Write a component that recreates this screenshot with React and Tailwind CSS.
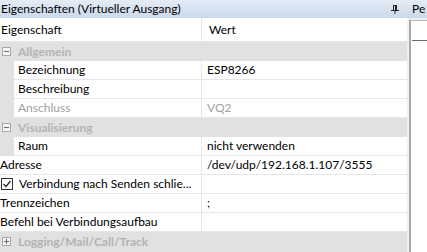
import React from 'react';

const font = { fontFamily: 'Lato, "Noto Sans", sans-serif' };

const Toggle = ({ open }) => (
  <svg width="9" height="9" viewBox="0 0 9 9" className="shrink-0">
    <rect x="0.5" y="0.5" width="8" height="8" fill="#f4f4f4" stroke="#a8a8a8" />
    <line x1="2" y1="4.5" x2="7" y2="4.5" stroke="#6a6a6a" />
    {!open && <line x1="4.5" y1="2" x2="4.5" y2="7" stroke="#6a6a6a" />}
  </svg>
);

const Pin = () => (
  <svg width="8" height="9" viewBox="0 0 8 9">
    <rect x="2" y="0" width="4" height="1" fill="#222" />
    <rect x="2" y="1" width="1" height="4" fill="#222" />
    <rect x="4" y="1" width="2" height="4" fill="#222" />
    <rect x="0" y="5" width="8" height="1" fill="#222" />
    <rect x="3.5" y="6" width="1" height="3" fill="#222" />
  </svg>
);

const Check = () => (
  <svg width="12" height="12" viewBox="0 0 12 12" className="shrink-0">
    <rect x="0.5" y="0.5" width="11" height="11" fill="#fff" stroke="#333" />
    <path d="M2.5 6 L5 8.5 L9.5 3" fill="none" stroke="#222" strokeWidth="1.2" />
  </svg>
);

const Group = ({ label, open = true }) => (
  <div className="flex h-[19px] items-center bg-[#e1e1e1] pl-[2px]">
    <Toggle open={open} />
    <span className="ml-[7px] font-bold text-[#b3b3b3]">{label}</span>
  </div>
);

const Row = ({ name, value, indent, muted, check }) => (
  <div className={`flex h-[19px] ${indent ? 'bg-[#e1e1e1] pl-[14px]' : 'bg-white'}`}>
    <div className="flex flex-1 bg-white border-b border-[#e6e6e6]">
      <div
        className={`flex items-center border-r border-[#e6e6e6] ${indent ? 'w-[188px] pl-[4px]' : 'w-[202px]'} ${
          muted ? 'text-[#a0a0a0]' : 'text-black'
        }`}
      >
        {check && (
          <span className="ml-[1px] mr-[6px] flex">
            <Check />
          </span>
        )}
        <span className="whitespace-nowrap">{name}</span>
      </div>
      <div className={`flex items-center pl-[5px] ${muted ? 'text-[#a0a0a0]' : 'text-black'}`}>{value}</div>
    </div>
  </div>
);

export default function App() {
  return (
    <div className="flex h-[252px] w-[427px] overflow-hidden bg-[#f0f0f0] text-[12px] leading-none" style={font}>
      {/* Property grid panel */}
      <div className="flex w-[409px] flex-col">
        <div className="flex h-[18px] items-center justify-between bg-gradient-to-b from-[#e4ecf6] to-[#cad9eb] pr-[10px]">
          <span className="pl-[1px] text-black">Eigenschaften (Virtueller Ausgang)</span>
          <Pin />
        </div>
        <div className="flex w-[407px] flex-1 flex-col bg-white">
          <div className="flex h-[24px] border-b border-[#e6e6e6]">
            <div className="flex w-[202px] items-center border-r border-[#e6e6e6] pl-[1px]">Eigenschaft</div>
            <div className="flex items-center pl-[7px]">Wert</div>
          </div>
          <Group label="Allgemein" />
          <Row indent name="Bezeichnung" value="ESP8266" />
          <Row indent name="Beschreibung" value="" />
          <Row indent muted name="Anschluss" value="VQ2" />
          <Group label="Visualisierung" />
          <Row indent name="Raum" value="nicht verwenden" />
          <Row name="Adresse" value="/dev/udp/192.168.1.107/3555" />
          <Row check name="Verbindung nach Senden schlie..." value="" />
          <Row name="Trennzeichen" value=";" />
          <Row name="Befehl bei Verbindungsaufbau" value="" />
          <div className="flex-1 bg-[#e1e1e1]">
            <div className="flex h-[19px] items-center pl-[2px]">
              <Toggle open={false} />
              <span className="ml-[7px] font-bold text-[#b3b3b3]">Logging/Mail/Call/Track</span>
            </div>
          </div>
        </div>
      </div>

      {/* Neighbouring panel, cut off */}
      <div className="flex flex-1 flex-col">
        <div className="flex h-[18px] items-center bg-gradient-to-b from-[#e4ecf6] to-[#cad9eb] pl-[3px]">
          <span className="whitespace-nowrap">Pe</span>
        </div>
        <div className="mt-[2px] flex-1 border-l-2 border-t border-[#b4b4b4] border-l-[#a9a9a9] bg-white">
          <div className="mt-[19px] ml-[1px] border-t border-[#6e6e6e]" />
        </div>
      </div>
    </div>
  );
}
